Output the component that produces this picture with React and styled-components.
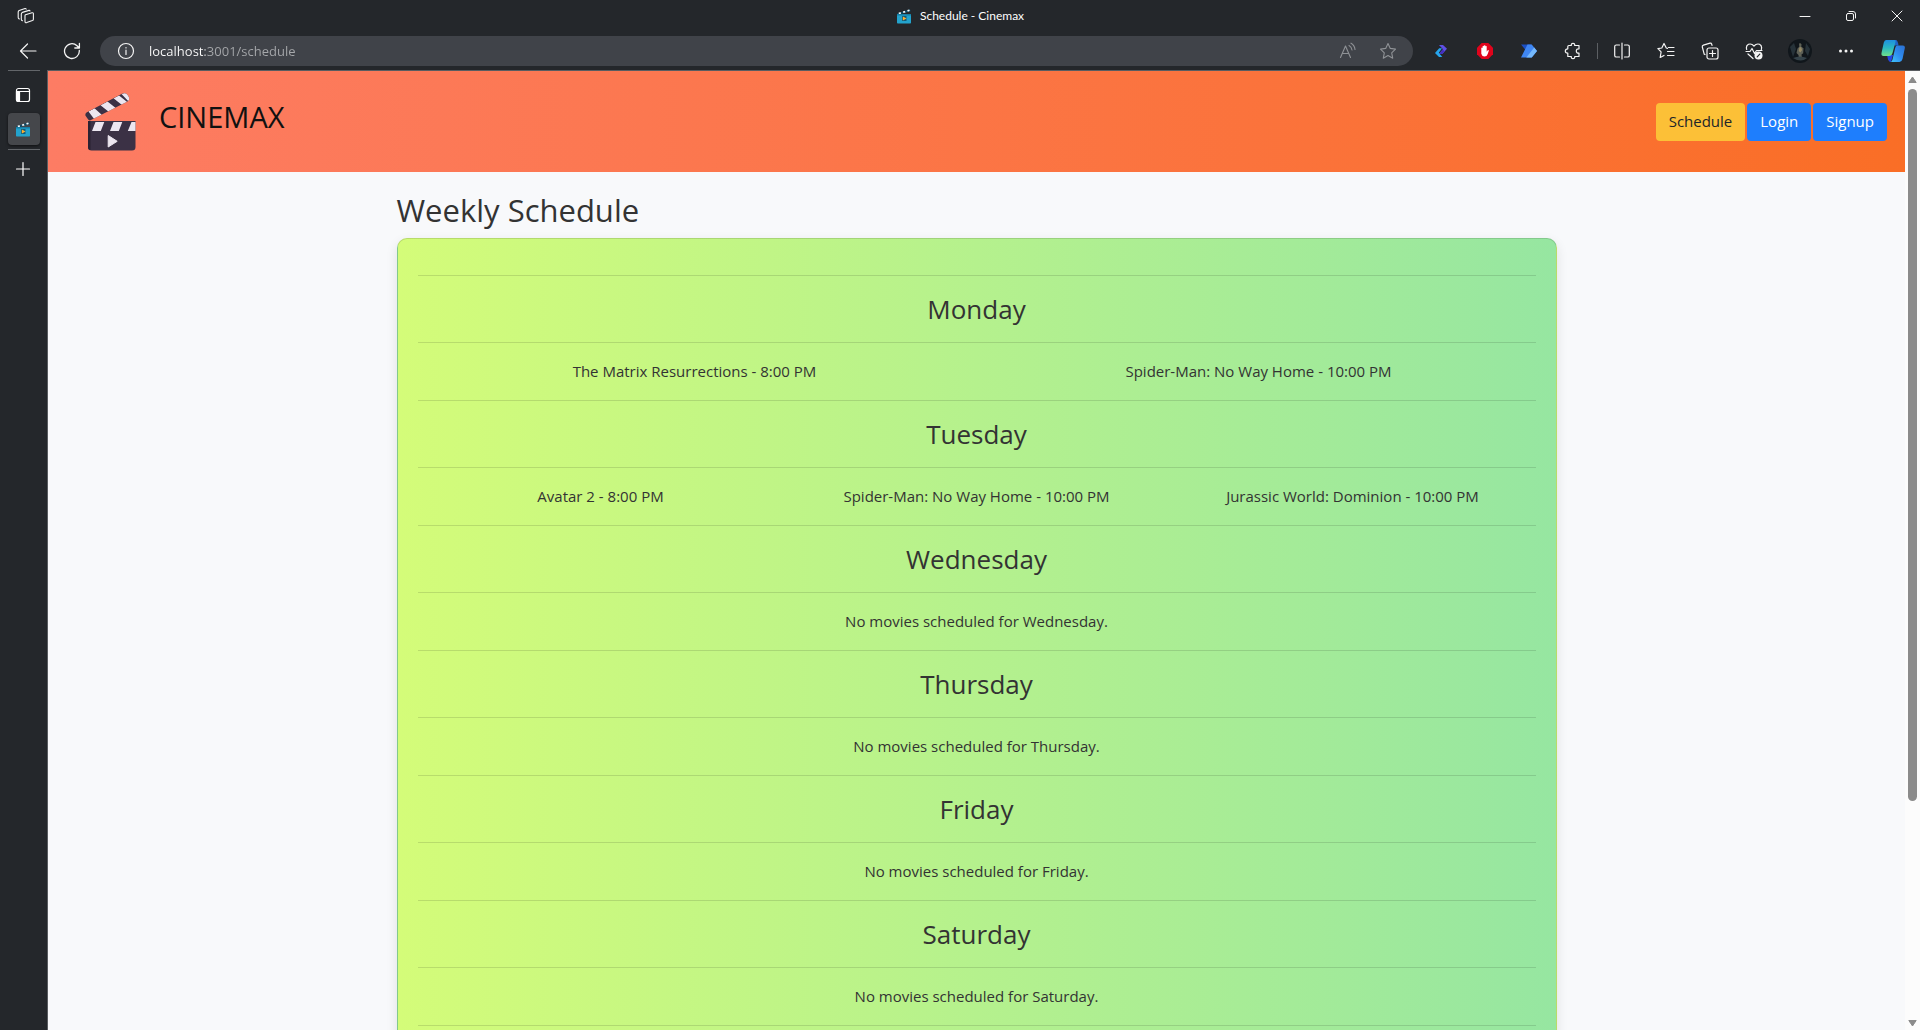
import React from "react";
import styled, { createGlobalStyle, css } from "styled-components";

const GlobalStyle = createGlobalStyle`
  *, *::before, *::after { box-sizing: border-box; }
  body {
    margin: 0;
    background: #24272b;
    font-family: "Open Sans", "Noto Sans", sans-serif;
  }
  h1, h2, h3, p, ul { margin: 0; padding: 0; font-weight: 400; }
`;

/* ---------- browser window ---------- */

const BrowserWindow = styled.div`
  display: flex;
  flex-direction: column;
  height: 100vh;
  background: #24272b;
  color: #fff;
`;

const IconButton = styled.button`
  display: flex;
  flex: none;
  align-items: center;
  justify-content: center;
  width: ${(p) => p.$width || 44}px;
  height: 30px;
  padding: 0;
  border: 0;
  background: none;
  color: ${(p) => (p.$muted ? "#8f9296" : "#f4f4f4")};
  svg { display: block; }
`;

const TitleBar = styled.header`
  display: grid;
  grid-template-columns: 1fr auto 1fr;
  align-items: center;
  height: 32px;
`;

const TabTitle = styled.div`
  display: flex;
  align-items: center;
  gap: 8px;
  font-family: Lato, "Open Sans", sans-serif;
  font-size: 12px;
  line-height: 16px;
`;

const WindowControls = styled.div`
  display: flex;
  justify-content: flex-end;
`;

const Toolbar = styled.div`
  display: flex;
  align-items: center;
  height: 38px;
  padding: 0 2px 0 6px;
`;

const AddressBar = styled.div`
  display: flex;
  flex: 1;
  align-items: center;
  height: 30px;
  margin: 0 6px;
  padding: 0 5px 0 4px;
  border-radius: 15px;
  background: #404349;
`;

const AddressInput = styled.input`
  flex: 1;
  min-width: 0;
  height: 30px;
  padding: 0 1px;
  border: 0;
  outline: 0;
  font: 13px/20px "Open Sans", sans-serif;
  color: transparent;
  background: linear-gradient(to right, #fff 57px, #a6a8ab 57px);
  background-clip: text;
`;

const ToolbarDivider = styled.span`
  flex: none;
  width: 1px;
  height: 16px;
  margin: 0 2px;
  background: #5c5f63;
`;

const Workspace = styled.div`
  display: flex;
  flex: 1;
  min-height: 0;
`;

const Sidebar = styled.nav`
  display: flex;
  flex: none;
  flex-direction: column;
  width: 47px;
  padding: 0 7px 0 8px;
`;

const SidebarRule = styled.hr`
  width: 100%;
  height: 1px;
  margin: 0;
  border: 0;
  background: #63666a;
`;

const SidebarButton = styled.button`
  display: flex;
  align-items: center;
  justify-content: center;
  width: 32px;
  height: 32px;
  margin-top: ${(p) => p.$space}px;
  padding: 0 2px 0 0;
  border: 0;
  border-radius: 4px;
  background: none;
  color: #fff;
  ${(p) =>
    p.$active &&
    css`
      margin-bottom: 4px;
      background: #45474b;
      box-shadow: 0 1px 3px rgba(0, 0, 0, 0.6);
    `}
`;

const PageFrame = styled.div`
  display: flex;
  flex: 1;
  min-width: 0;
  border-top: 1px solid #595c60;
  border-left: 1px solid #595c60;
  background: #f8f9fb;
`;

const PageView = styled.div`
  flex: 1;
  min-width: 0;
  overflow-y: auto;
  scrollbar-width: none;
  background: #f8f9fb;
  color: #333;
`;

const Scrollbar = styled.div`
  display: flex;
  flex: none;
  flex-direction: column;
  align-items: center;
  gap: 6px;
  width: 15px;
  padding: 5px 0 3px;
  background: #fcfcfc;
`;

const ScrollTrack = styled.div`
  flex: 1;
  width: 9px;
`;

const ScrollThumb = styled.div`
  height: 77%;
  border-radius: 5px;
  background: #8b8b8b;
`;

/* ---------- site ---------- */

const SiteHeader = styled.header`
  display: flex;
  align-items: center;
  justify-content: space-between;
  min-height: 101px;
  padding: 0 18px 0 37px;
  background: linear-gradient(to right, #fd7c64, #fa6e26);
`;

const Brand = styled.div`
  display: flex;
  align-items: center;
  gap: 23px;
`;

const BrandName = styled.h1`
  margin-bottom: 10px;
  font-size: 29px;
  line-height: 38px;
  color: #111;
`;

const SiteNav = styled.nav`
  display: flex;
  gap: 2px;
`;

const NavLink = styled.a`
  padding: 6px 13px 8px;
  border-radius: 4px;
  font-size: 15px;
  line-height: 24px;
  text-decoration: none;
  color: ${(p) => (p.$highlight ? "#212529" : "#fff")};
  background: ${(p) => (p.$highlight ? "#fcc037" : "#1e7efd")};
`;

const Content = styled.main`
  max-width: 1160px;
  margin: 0 auto;
  padding: 19px 0;
`;

const PageTitle = styled.h2`
  margin-bottom: 9px;
  font-size: 31px;
  line-height: 38px;
`;

const ScheduleCard = styled.div`
  padding: 20px;
  border: 1px solid rgba(0, 0, 0, 0.125);
  border-radius: 10px;
  background-image: linear-gradient(to right, #d4fc79, #96e6a1);
  box-shadow: 0 4px 12px rgba(0, 0, 0, 0.1);
  text-align: center;
`;

const Rule = styled.hr`
  height: 1px;
  margin: 16px 0;
  border: 0;
  background: rgba(0, 0, 0, 0.12);
`;

const DayName = styled.h3`
  font-size: 26px;
  line-height: 34px;
`;

const MovieList = styled.ul`
  display: flex;
  gap: 10px;
  list-style: none;
`;

const Movie = styled.li`
  flex: 1;
  font-size: 15px;
  line-height: 25px;
`;

const EmptyNote = styled.p`
  font-size: 15px;
  line-height: 25px;
`;

/* ---------- drawings ---------- */

const Line = ({ size = 16, sw = 1, children }) => (
  <svg width={size} height={size} viewBox={`0 0 ${size} ${size}`} fill="none" stroke="currentColor"
    strokeWidth={sw} strokeLinecap="round" strokeLinejoin="round" aria-hidden="true">
    {children}
  </svg>
);

const WorkspacesIcon = () => (
  <Line size={18} sw={1.1}>
    <path d="M8.5 7.8 15 5.8q1.4-.3 1.4 1v5.4q0 1-1 1.4L9.7 15.6q-1.7.5-1.7-1V8.8q0-.7.5-1z" />
    <path d="M5.5 13.7q-1.2-.1-1.2-1.4V7q0-1.2 1.1-1.6L12 3.4q.8-.1 1 .6" />
    <path d="M2.5 12q-1.3-.2-1.3-1.6V5q0-1.1 1-1.5L8 1.6q.9-.2 1.2.5" />
  </Line>
);

const BackIcon = () => <Line size={18} sw={1.2}><path d="M17 9H1.500M8.500 2 1.500 9l7 7" /></Line>;

const RefreshIcon = () => (
  <Line size={18} sw={1.3}><path d="M16.300 8.500A7.400 7.400 0 1 1 14 3.700L16.200 6M16.400 1.500V6H11.800" /></Line>
);

const InfoIcon = () => (
  <Line size={18} sw={1.2}><circle cx="9" cy="9" r="7.5" /><path d="M9 8.200V12.500M9 5.500v.4" /></Line>
);

const ReadAloudIcon = () => (
  <Line size={18} sw={1.1}>
    <path d="M1.500 15.500 6.500 4l5 11.500M3.200 11.500h6.600M10 3.500q2.500 1.200 3 4.500M12 1.200q3.600 2 4 6.300" />
  </Line>
);

const StarIcon = () => (
  <Line size={18} sw={1.1}>
    <path d="M9 1.500l2.300 4.900 5.200.7-3.800 3.700 1 5.400L9 13.600l-4.700 2.600 1-5.400L1.500 7.100l5.200-.7z" />
  </Line>
);

const ZigzagIcon = () => (
  <svg width="14" height="14" viewBox="0 0 14 14" aria-hidden="true">
    <path d="M5 1h4l4 3.800L8.300 10H5l4-4.800z" fill="#5f4fe6" />
    <path d="M8.800 5.300 5 10h3.300L10.500 7.500z" fill="#4330bd" />
    <path d="M5.200 4.300H8L4.800 8.800 8.300 13H5L1 9z" fill="#25a5ec" />
  </svg>
);

const BlockerIcon = () => (
  <svg width="16" height="16" viewBox="0 0 16 16" aria-hidden="true">
    <path d="M4.700 0h6.600L16 4.700v6.600L11.300 16H4.700L0 11.300V4.700z" fill="#e0041c" />
    <path d="M4.300 7.500V5q.7-.8 1.300 0V3.200q.7-.7 1.300 0v-.7q.8-.7 1.500 0v.8q.7-.6 1.300 0v5.500l.8-1.300q.9-.8 1.400.1L10.700 11q-.8 2.600-3.200 2.600T4.300 10.700z" fill="#fff" />
  </svg>
);

const FlowIcon = () => (
  <svg width="16" height="14" viewBox="0 0 16 14" aria-hidden="true">
    <path d="M0 .5h10.500L5.500 7z" fill="#1b4fc4" />
    <path d="M6.500.5h4.200L16 7l-5.300 6.500H0z" fill="#3f86f2" />
    <path d="M13.200 3.500 16 7l-5.300 6.500H5.300z" fill="#74b8fb" />
  </svg>
);

const PuzzleIcon = () => (
  <Line size={18} sw={1.2}>
    <path d="M4.800 3.500h2.500q-.3-2.200 1.700-2.200t1.700 2.200h4.300v3.300q-2.700-.2-2.700 2.200t2.700 2.200v3.300h-4.300q.3 2.200-1.700 2.200t-1.700-2.200H3.800v-3.300Q1.300 11.200 1.300 9t2.500-2.200V4.500q0-1 1-1z" />
  </Line>
);

const SplitIcon = () => (
  <Line size={18} sw={1.2}>
    <path d="M6.500 3H3.300Q1.700 3 1.700 4.600v8.800Q1.700 15 3.300 15h3.200M11.500 3h3.200q1.600 0 1.600 1.600v8.800q0 1.600-1.600 1.600h-3.200M9 1v16" />
  </Line>
);

const FavoritesIcon = () => (
  <Line size={18} sw={1.2}>
    <path d="M10.500 6.300 9.300 6 7 1.500 4.800 6 .9 6.600l3.200 3.200-.9 5.700L7 13.500M11.500 5.500H17M10.500 9.500H17M10.500 13.500H17" />
  </Line>
);

const CollectionsIcon = () => (
  <Line size={18} sw={1.2}>
    <rect x="6" y="6" width="11" height="11" rx="2" />
    <path d="M11.500 8.500v6M8.500 11.500h6M4 12.500l-.8-.4L1.300 5q-.3-1.500 1.100-1.900L9 1.200q1.300-.3 1.700 1l.3 1.200" />
  </Line>
);

const HeartIcon = () => (
  <Line size={18} sw={1.2}>
    <path d="M1.700 7.500Q.6 3.800 3.500 2.300 6.500 1.200 9 4q2.500-2.800 5.500-1.700 2.900 1.500 1.800 5.200M1 9.500h4l2-3 2.500 5 2-3H17M3 12l5 4.500" />
    <circle cx="13.5" cy="13.5" r="4" fill="currentColor" stroke="none" />
    <path d="M12.200 14.800l2.600-2.600" stroke="#24272b" />
  </Line>
);

const Avatar = () => (
  <svg width="24" height="24" viewBox="0 0 24 24" aria-hidden="true">
    <circle cx="12" cy="12" r="12" fill="#10161b" />
    <path d="M2 8l4-4 2 6-3 8zM18 4l4 6-2 7-3-5z" fill="#263239" />
    <path d="M11 4.500q1.800-.8 2.500.8l-.2 2.500 2.200 1.500-.3 5-1.700 1.200.6 5H11l-.5-4.500L8.500 14l1-4.500 1.800-1.700z" fill="#5d6056" />
    <path d="M11.300 8.500l1.800-.5 1 3-1.700 2.500-1.600-1.500z" fill="#948866" />
    <path d="M5 19q7-3 14 0-6 5-14 0z" fill="#35434a" />
  </svg>
);

const DotsIcon = () => (
  <svg width="16" height="4" viewBox="0 0 16 4" fill="currentColor" aria-hidden="true">
    <circle cx="2.5" cy="2" r="1.5" /><circle cx="8" cy="2" r="1.5" /><circle cx="13.5" cy="2" r="1.5" />
  </svg>
);

const CopilotIcon = () => (
  <svg width="24" height="24" viewBox="0 0 24 24" aria-hidden="true">
    <defs>
      <linearGradient id="copLeft" x1="0" y1="0" x2="0" y2="1">
        <stop offset="0" stopColor="#1f8fe0" /><stop offset=".5" stopColor="#2bb8c0" /><stop offset="1" stopColor="#6fe08a" />
      </linearGradient>
      <linearGradient id="copRight" x1="1" y1="0" x2="0" y2="1">
        <stop offset="0" stopColor="#2a6fd0" /><stop offset=".5" stopColor="#2f8cf0" /><stop offset="1" stopColor="#3fc8fa" />
      </linearGradient>
    </defs>
    <path d="M6 16h6l-2 7q-2 0-3-2.500z" fill="#2547e0" />
    <path d="M12 1h3q2 .5 2.500 5.500H13z" fill="#2062c8" />
    <path d="M5 1h8.500q1.500 0 1 2L11.500 14q-.8 3-3.500 3H2.500Q0 17 .5 14L2.800 3.500Q3.500 1 5 1z" fill="url(#copLeft)" />
    <path d="M16 6.500h6q2.300 0 1.800 2.700L21.500 20q-.8 3-3 3H9.500q1.500-.5 2-2.500L14.200 9q.5-2.500 1.800-2.500z" fill="url(#copRight)" />
  </svg>
);

const PaneIcon = () => (
  <Line size={16} sw={1.2}>
    <rect x="1.500" y="1.500" width="13" height="13" rx="2" /><path d="M5 4.500h9.500" />
    <path d="M1.500 4.500H4.500v10H3Q1.500 14.500 1.500 13z" fill="currentColor" />
  </Line>
);

const Favicon = ({ size = 16 }) => (
  <svg width={size} height={size} viewBox="0 0 16 16" aria-hidden="true">
    <path d="M1 5.500 14 1.300l.7 2L3 6.500z" fill="#0d4a66" />
    <path d="M2.500 4.800l2-.7.6 1.700-2 .5zM6.800 3.400l2-.7.7 1.700-2 .6zM11.200 2l2-.6.6 1.700-2 .6z" fill="#f2f6f8" />
    <rect x="1" y="6" width="14" height="9.5" rx=".8" fill="#23a3cd" />
    <path d="M1 6h14v1.500H1z" fill="#167ea5" />
    <path d="M6 8h4.500v5H6z" fill="#145b78" />
    <path d="M6.800 8.500 10.500 10.600 6.800 12.600z" fill="#ffb02e" />
  </svg>
);

const ClapperLogo = () => (
  <svg width="51" height="58" viewBox="0 0 51 58" role="img" aria-label="Cinemax">
    <defs>
      <clipPath id="arm"><path d="M1.500 19.500 37 .8q4-1.400 6 1.600l1 2q1 2.600-1.500 4L5.500 27.300q-1.800.5-2.500-1L.4 22.500q-.3-2 1.100-3z" /></clipPath>
    </defs>
    <g clipPath="url(#arm)">
      <path d="M-2-2h50v32H-2z" fill="#3b3145" />
      <path d="M3.500 18.500 9.500 15.300 17.500 22.500 9.500 26.500zM15.500 12.200 22.500 8.500 31 15.300 24 19zM28.500 5.200 34 2.400 42.500 9.200 37 12zM39 0 46-1 46 9 43.600 8.600 36.500 1z" fill="#ece6f0" />
    </g>
    <path d="M3 28h47.500v26q0 3.500-3.500 3.500H6.500Q3 57.500 3 54z" fill="#3b3145" />
    <path d="M3 28h2.500v29Q3 57 3 54z" fill="#2b2233" />
    <path d="M10.500 29h8.800l-3.500 9H7zM28.500 29h8.800l-3.500 9H25zM46.500 29h4v9H42.800z" fill="#ece6f0" />
    <path d="M23.200 42.500v11.500l9-5.700z" fill="#ece6f0" stroke="#ece6f0" strokeLinejoin="round" />
  </svg>
);

const ScrollArrow = ({ down }) => (
  <svg width="9" height="7" viewBox="0 0 9 7" aria-hidden="true">
    <path d={down ? "M.8.5h7.400L4.500 6z" : "M.8 6.500h7.400L4.500 1z"} fill="#8b8b8b" stroke="#8b8b8b" strokeLinejoin="round" />
  </svg>
);

/* ---------- data ---------- */

const schedule = [
  { day: "Monday", movies: ["The Matrix Resurrections - 8:00 PM", "Spider-Man: No Way Home - 10:00 PM"] },
  { day: "Tuesday", movies: ["Avatar 2 - 8:00 PM", "Spider-Man: No Way Home - 10:00 PM", "Jurassic World: Dominion - 10:00 PM"] },
  { day: "Wednesday", movies: [] },
  { day: "Thursday", movies: [] },
  { day: "Friday", movies: [] },
  { day: "Saturday", movies: [] },
];

const extensions = [
  ["Zigzag", <ZigzagIcon />],
  ["Content blocker", <BlockerIcon />],
  ["Automate", <FlowIcon />],
  ["Extensions", <PuzzleIcon />],
];

const tools = [
  ["Split screen", <SplitIcon />],
  ["Favorites", <FavoritesIcon />],
  ["Collections", <CollectionsIcon />],
  ["Browser essentials", <HeartIcon />],
  ["Profile", <Avatar />, 48],
  ["Settings and more", <DotsIcon />],
  ["Copilot", <CopilotIcon />, 50],
];

function ScheduleDay({ day, movies }) {
  return (
    <section>
      <Rule />
      <DayName>{day}</DayName>
      <Rule />
      {movies.length > 0 ? (
        <MovieList>{movies.map((m) => <Movie key={m}>{m}</Movie>)}</MovieList>
      ) : (
        <EmptyNote>No movies scheduled for {day}.</EmptyNote>
      )}
    </section>
  );
}

function SchedulePage() {
  return (
    <PageView>
      <SiteHeader>
        <Brand>
          <ClapperLogo />
          <BrandName>CINEMAX</BrandName>
        </Brand>
        <SiteNav>
          <NavLink href="#schedule" $highlight>Schedule</NavLink>
          <NavLink href="#login">Login</NavLink>
          <NavLink href="#signup">Signup</NavLink>
        </SiteNav>
      </SiteHeader>
      <Content>
        <PageTitle>Weekly Schedule</PageTitle>
        <ScheduleCard>
          {schedule.map((d) => <ScheduleDay key={d.day} {...d} />)}
          <Rule />
        </ScheduleCard>
      </Content>
    </PageView>
  );
}

export default function App() {
  return (
    <BrowserWindow>
      <GlobalStyle />
      <TitleBar>
        <IconButton $width={52} aria-label="Workspaces"><WorkspacesIcon /></IconButton>
        <TabTitle><Favicon />Schedule - Cinemax</TabTitle>
        <WindowControls>
          <IconButton $width={46} aria-label="Minimize"><Line size={12}><path d="M1 6.500h10" /></Line></IconButton>
          <IconButton $width={46} aria-label="Restore">
            <Line size={12}><rect x="1.500" y="3.500" width="7" height="7" rx="1.500" /><path d="M4 1.500h4q2.500 0 2.500 2.500v4" /></Line>
          </IconButton>
          <IconButton $width={46} aria-label="Close"><Line size={12}><path d="M1 1l10 10M11 1 1 11" /></Line></IconButton>
        </WindowControls>
      </TitleBar>
      <Toolbar>
        <IconButton aria-label="Back"><BackIcon /></IconButton>
        <IconButton aria-label="Refresh"><RefreshIcon /></IconButton>
        <AddressBar>
          <IconButton aria-label="Site information"><InfoIcon /></IconButton>
          <AddressInput aria-label="Address" defaultValue="localhost:3001/schedule" />
          <IconButton $width={40} $muted aria-label="Read aloud"><ReadAloudIcon /></IconButton>
          <IconButton $width={40} $muted aria-label="Add to favorites"><StarIcon /></IconButton>
        </AddressBar>
        {extensions.map(([label, icon]) => <IconButton key={label} aria-label={label}>{icon}</IconButton>)}
        <ToolbarDivider />
        {tools.map(([label, icon, width]) => (
          <IconButton key={label} aria-label={label} $width={width}>{icon}</IconButton>
        ))}
      </Toolbar>
      <Workspace>
        <Sidebar>
          <SidebarRule />
          <SidebarButton $space={8} aria-label="Tab actions"><PaneIcon /></SidebarButton>
          <SidebarButton $space={2} $active aria-label="Schedule - Cinemax"><Favicon /></SidebarButton>
          <SidebarRule />
          <SidebarButton $space={3} aria-label="New tab"><Line size={16} sw={1.2}><path d="M8 1.500v13M1.500 8h13" /></Line></SidebarButton>
        </Sidebar>
        <PageFrame>
          <SchedulePage />
          <Scrollbar>
            <ScrollArrow />
            <ScrollTrack><ScrollThumb /></ScrollTrack>
            <ScrollArrow down />
          </Scrollbar>
        </PageFrame>
      </Workspace>
    </BrowserWindow>
  );
}
